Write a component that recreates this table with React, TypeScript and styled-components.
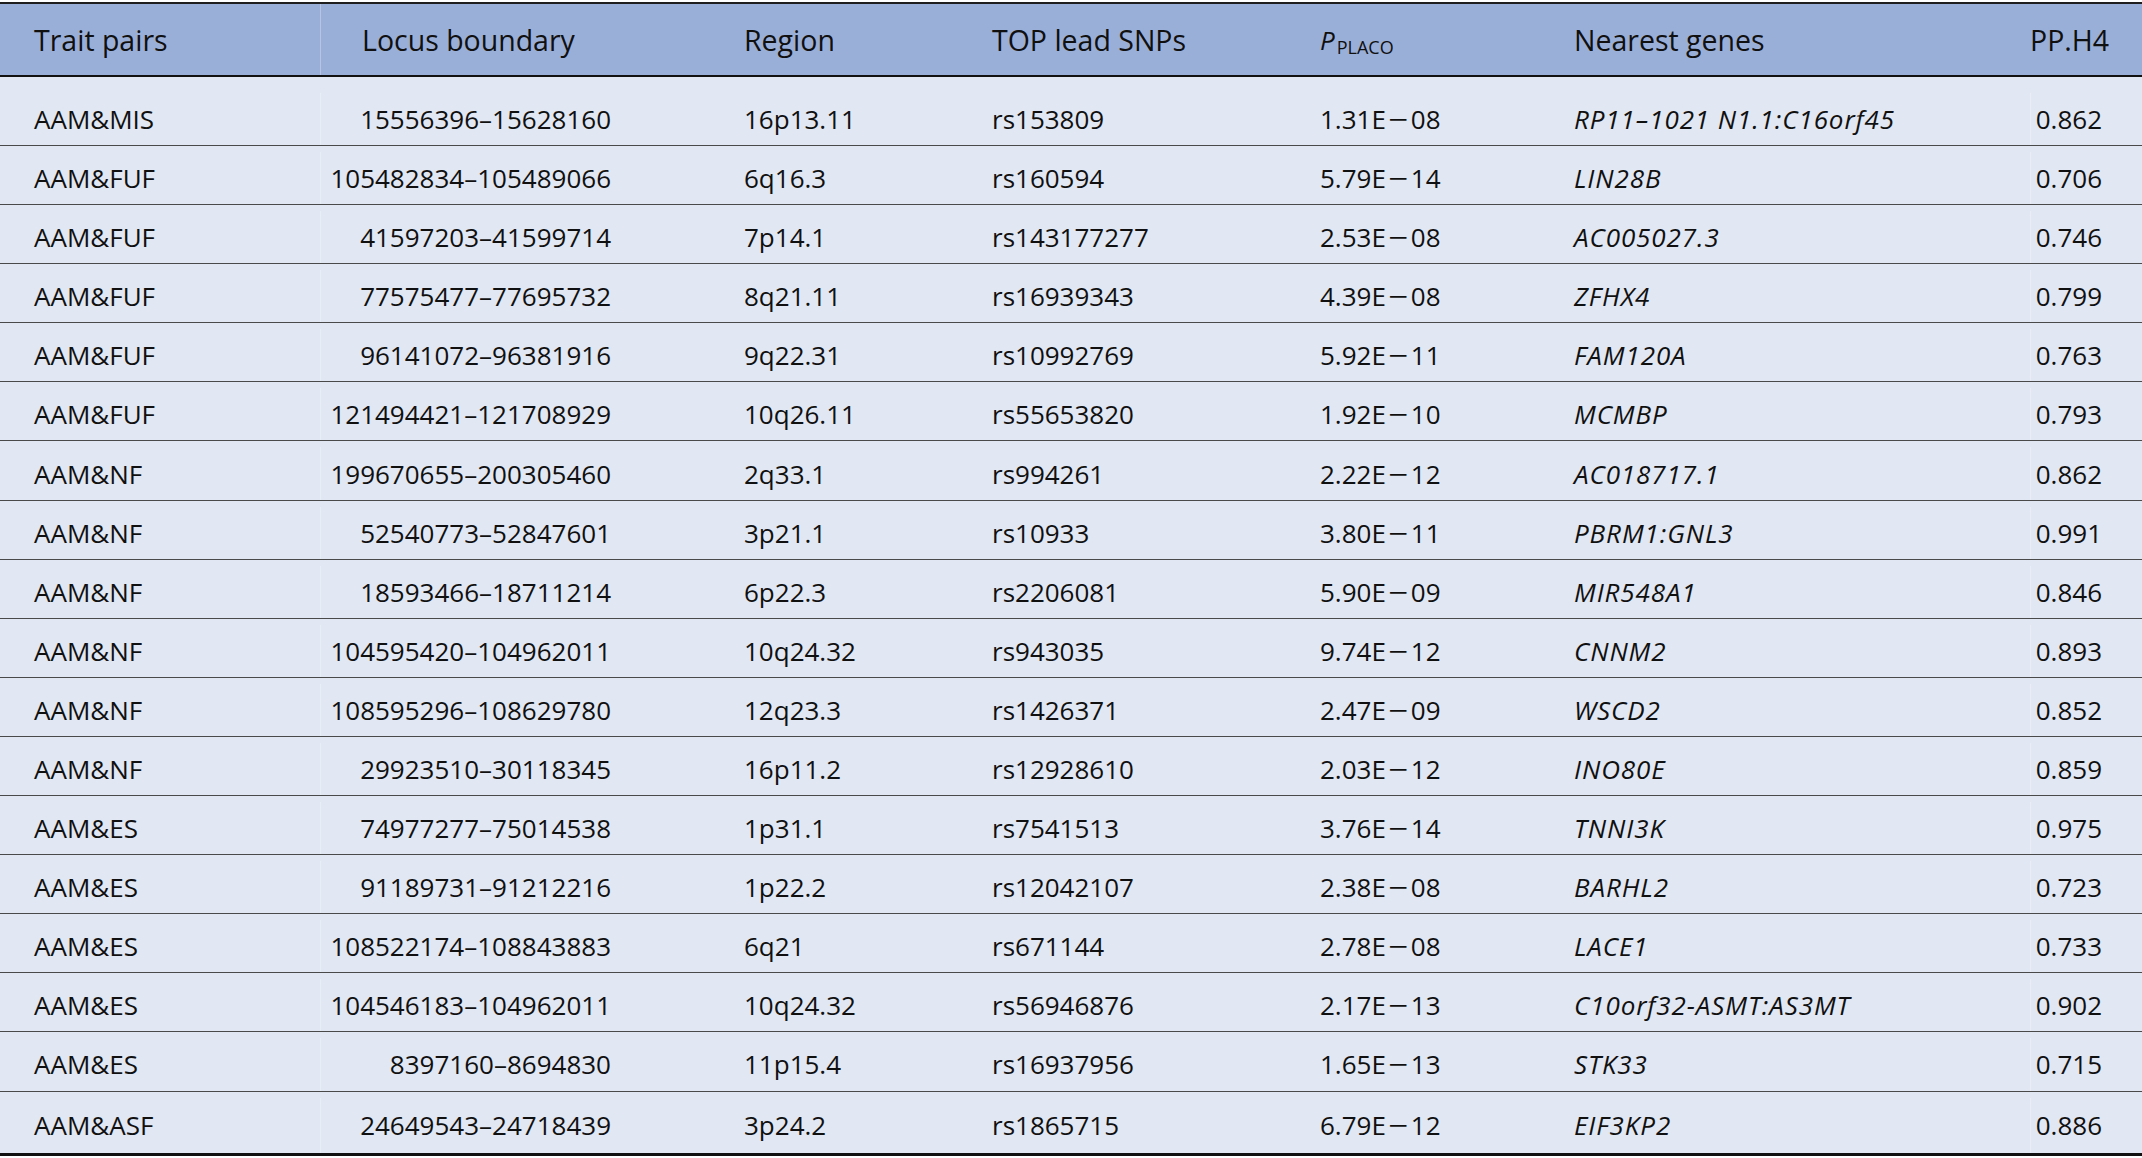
import React from "react";
import styled, { createGlobalStyle } from "styled-components";

const GlobalStyle = createGlobalStyle`
  html, body {
    margin: 0;
    padding: 0;
    background: #ffffff;
  }
  body {
    font-family: "Open Sans", "Noto Sans", sans-serif;
    color: #101010;
  }
`;

type Locus = {
  pair: string;
  boundary: string;
  region: string;
  snp: string;
  p: string;
  gene: string;
  pp: string;
};

const LOCI: Locus[] = [
  { pair: "AAM&MIS", boundary: "15556396–15628160", region: "16p13.11", snp: "rs153809", p: "1.31E−08", gene: "RP11–1021 N1.1:C16orf45", pp: "0.862" },
  { pair: "AAM&FUF", boundary: "105482834–105489066", region: "6q16.3", snp: "rs160594", p: "5.79E−14", gene: "LIN28B", pp: "0.706" },
  { pair: "AAM&FUF", boundary: "41597203–41599714", region: "7p14.1", snp: "rs143177277", p: "2.53E−08", gene: "AC005027.3", pp: "0.746" },
  { pair: "AAM&FUF", boundary: "77575477–77695732", region: "8q21.11", snp: "rs16939343", p: "4.39E−08", gene: "ZFHX4", pp: "0.799" },
  { pair: "AAM&FUF", boundary: "96141072–96381916", region: "9q22.31", snp: "rs10992769", p: "5.92E−11", gene: "FAM120A", pp: "0.763" },
  { pair: "AAM&FUF", boundary: "121494421–121708929", region: "10q26.11", snp: "rs55653820", p: "1.92E−10", gene: "MCMBP", pp: "0.793" },
  { pair: "AAM&NF", boundary: "199670655–200305460", region: "2q33.1", snp: "rs994261", p: "2.22E−12", gene: "AC018717.1", pp: "0.862" },
  { pair: "AAM&NF", boundary: "52540773–52847601", region: "3p21.1", snp: "rs10933", p: "3.80E−11", gene: "PBRM1:GNL3", pp: "0.991" },
  { pair: "AAM&NF", boundary: "18593466–18711214", region: "6p22.3", snp: "rs2206081", p: "5.90E−09", gene: "MIR548A1", pp: "0.846" },
  { pair: "AAM&NF", boundary: "104595420–104962011", region: "10q24.32", snp: "rs943035", p: "9.74E−12", gene: "CNNM2", pp: "0.893" },
  { pair: "AAM&NF", boundary: "108595296–108629780", region: "12q23.3", snp: "rs1426371", p: "2.47E−09", gene: "WSCD2", pp: "0.852" },
  { pair: "AAM&NF", boundary: "29923510–30118345", region: "16p11.2", snp: "rs12928610", p: "2.03E−12", gene: "INO80E", pp: "0.859" },
  { pair: "AAM&ES", boundary: "74977277–75014538", region: "1p31.1", snp: "rs7541513", p: "3.76E−14", gene: "TNNI3K", pp: "0.975" },
  { pair: "AAM&ES", boundary: "91189731–91212216", region: "1p22.2", snp: "rs12042107", p: "2.38E−08", gene: "BARHL2", pp: "0.723" },
  { pair: "AAM&ES", boundary: "108522174–108843883", region: "6q21", snp: "rs671144", p: "2.78E−08", gene: "LACE1", pp: "0.733" },
  { pair: "AAM&ES", boundary: "104546183–104962011", region: "10q24.32", snp: "rs56946876", p: "2.17E−13", gene: "C10orf32-ASMT:AS3MT", pp: "0.902" },
  { pair: "AAM&ES", boundary: "8397160–8694830", region: "11p15.4", snp: "rs16937956", p: "1.65E−13", gene: "STK33", pp: "0.715" },
  { pair: "AAM&ASF", boundary: "24649543–24718439", region: "3p24.2", snp: "rs1865715", p: "6.79E−12", gene: "EIF3KP2", pp: "0.886" },
];

// 1.31E−08 -> mantissa, minus, exponent (the minus is drawn wider, as in the print)
const PValue = ({ value }: { value: string }) => {
  const [mantissa, exponent] = value.split("−");
  return (
    <>
      {mantissa}
      <Minus>−</Minus>
      {exponent}
    </>
  );
};

export default function App() {
  return (
    <>
      <GlobalStyle />
      <Page>
        <Table>
          <HeadRow>
            <Cell $pl={34}>Trait pairs</Cell>
            <Cell $pl={42} $divider>Locus boundary</Cell>
            <Cell>Region</Cell>
            <Cell>TOP lead SNPs</Cell>
            <Cell>
              <PItalic>P</PItalic>
              <Sub>PLACO</Sub>
            </Cell>
            <Cell>Nearest genes</Cell>
            <Cell $right $pr={35}>PP.H4</Cell>
          </HeadRow>
          {LOCI.map((row, i) => (
            <BodyRow key={i} $first={i === 0} $last={i === LOCI.length - 1}>
              <Cell $pl={34}>{row.pair}</Cell>
              <Cell $right $pr={133} $divider>{row.boundary}</Cell>
              <Cell>{row.region}</Cell>
              <Cell>{row.snp}</Cell>
              <Cell>
                <PValue value={row.p} />
              </Cell>
              <Gene>{row.gene}</Gene>
              <Cell $right $pr={40} $divider>{row.pp}</Cell>
            </BodyRow>
          ))}
        </Table>
      </Page>
    </>
  );
}

const Page = styled.div`
  padding-top: 2px;
  width: 2142px;
`;

const Table = styled.div`
  border-top: 2px solid #1e1e1e;
  border-bottom: 3px solid #111111;
  font-size: 26px;
`;

const columns = `320px 424px 248px 328px 254px 456px 1fr`;

const HeadRow = styled.div`
  display: grid;
  grid-template-columns: ${columns};
  align-items: stretch;
  box-sizing: border-box;
  height: 73px;
  background: #9aafd8;
  border-bottom: 2.5px solid #111111;
  font-size: 28.5px;

  & > div {
    display: flex;
    align-items: center;
  }
  & > div:last-child {
    justify-content: flex-end;
  }
`;

const BodyRow = styled.div<{ $first?: boolean; $last?: boolean }>`
  display: grid;
  grid-template-columns: ${columns};
  align-items: stretch;
  box-sizing: border-box;
  height: ${(p) => (p.$first ? "69px" : p.$last ? "61.5px" : "59.1px")};
  padding-top: ${(p) => (p.$first ? "16px" : "6px")};
  background: #e1e7f3;
  border-bottom: ${(p) => (p.$last ? "none" : "1.5px solid #4a4a4a")};

  & > div {
    display: flex;
    align-items: center;
  }
`;

const Cell = styled.div<{ $right?: boolean; $pl?: number; $pr?: number; $divider?: boolean }>`
  white-space: nowrap;
  justify-content: ${(p) => (p.$right ? "flex-end" : "flex-start")};
  padding-left: ${(p) => p.$pl ?? 0}px;
  padding-right: ${(p) => p.$pr ?? 0}px;
  box-shadow: ${(p) => (p.$divider ? "inset 1px 0 0 rgba(255, 255, 255, 0.28)" : "none")};
`;

const Gene = styled(Cell)`
  font-style: italic;
  letter-spacing: 0.9px;
`;

const Minus = styled.span`
  display: inline-block;
  margin: 0 5px;
  transform: scaleX(1.35);
`;

const PItalic = styled.span`
  font-style: italic;
  font-size: 26px;
`;

const Sub = styled.span`
  font-size: 18px;
  position: relative;
  top: 7px;
  margin-left: 2px;
`;
